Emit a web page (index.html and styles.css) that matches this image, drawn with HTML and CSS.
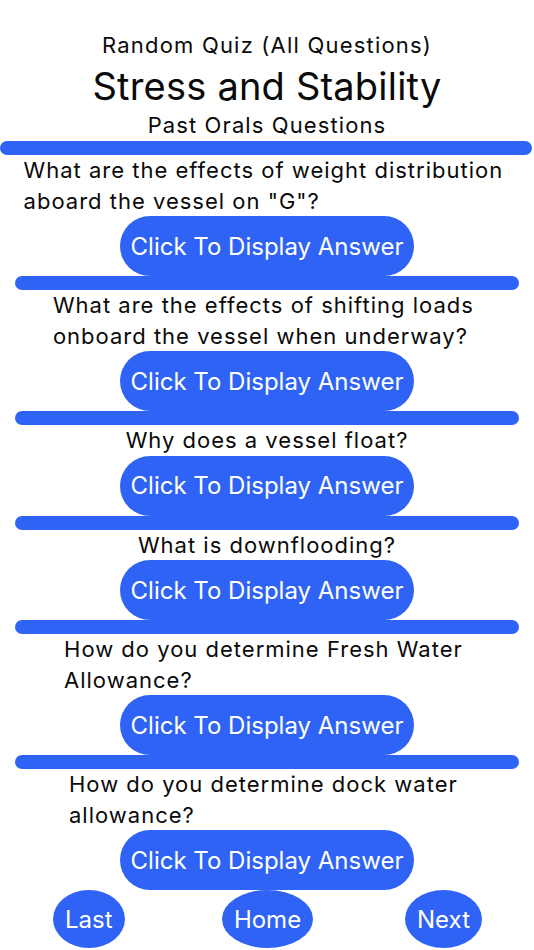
FILE: index.html
```html
<!DOCTYPE html>
<html lang="en">
<head>
<meta charset="utf-8">
<title>Stress and Stability</title>
<link rel="stylesheet" href="styles.css">
</head>
<body>
<div class="screen">
  <header class="header">
    <div class="sub">Random Quiz (All Questions)</div>
    <h1 class="title">Stress and Stability</h1>
    <div class="sub past">Past Orals Questions</div>
  </header>
  <div class="bar bar-top"></div>

  <section class="item">
    <p class="q">What are the effects of weight distribution <br>aboard the vessel on "G"?</p>
    <button class="answer">Click To Display Answer</button>
  </section>
  <div class="bar"></div>

  <section class="item">
    <p class="q">What are the effects of shifting loads <br>onboard the vessel when underway?</p>
    <button class="answer">Click To Display Answer</button>
  </section>
  <div class="bar"></div>

  <section class="item">
    <p class="q">Why does a vessel float?</p>
    <button class="answer">Click To Display Answer</button>
  </section>
  <div class="bar"></div>

  <section class="item">
    <p class="q">What is downflooding?</p>
    <button class="answer">Click To Display Answer</button>
  </section>
  <div class="bar"></div>

  <section class="item">
    <p class="q">How do you determine Fresh Water <br>Allowance?</p>
    <button class="answer">Click To Display Answer</button>
  </section>
  <div class="bar"></div>

  <section class="item">
    <p class="q">How do you determine dock water <br>allowance?</p>
    <button class="answer">Click To Display Answer</button>
  </section>

  <nav class="nav">
    <button class="nav-btn nav-left">Last</button>
    <button class="nav-btn nav-center">Home</button>
    <button class="nav-btn nav-right">Next</button>
  </nav>
</div>
</body>
</html>
```
FILE: styles.css
```css
html, body {
  margin: 0;
  padding: 0;
  background: #ffffff;
}

body {
  font-family: Inter, "Noto Sans", "Liberation Sans", sans-serif;
  color: #0a0a0a;
  width: 534px;
  height: 950px;
  overflow: hidden;
}

.screen {
  display: flex;
  flex-direction: column;
}

.header {
  display: flex;
  flex-direction: column;
  align-items: center;
  padding-top: 31px;
}

.sub {
  font-size: 22px;
  line-height: 28px;
  font-weight: 400;
  letter-spacing: 1.2px;
}

.title {
  margin: 0;
  font-size: 38px;
  font-weight: 400;
  line-height: 54px;
  letter-spacing: 0.2px;
}

.past {
  line-height: 24px;
  margin-bottom: 4px;
  letter-spacing: 1.1px;
}

.bar {
  height: 14px;
  border-radius: 7px;
  background: #2f63f5;
  margin: 0 15px;
}

.bar-top {
  margin: 0 2px 0 0;
}

.item {
  display: flex;
  flex-direction: column;
  align-items: center;
}

.q {
  margin: 0;
  width: max-content;
  text-align: left;
  white-space: pre;
  font-size: 22px;
  line-height: 30.5px;
  letter-spacing: 1px;
}

.answer {
  display: flex;
  align-items: center;
  justify-content: center;
  width: 294px;
  height: 60px;
  border: none;
  border-radius: 30px;
  background: #2f63f5;
  color: #ffffff;
  font-family: inherit;
  font-size: 24px;
  padding: 0;
}

.nav {
  display: grid;
  grid-template-columns: 1fr auto 1fr;
  align-items: start;
  padding: 0 52px 0 53px;
}

.nav-btn {
  height: 58px;
  padding: 0 12px;
  border: none;
  border-radius: 50%;
  background: #2f63f5;
  color: #ffffff;
  font-family: inherit;
  font-size: 24px;
}

.nav-left {
  justify-self: start;
}

.nav-center {
  justify-self: center;
}

.nav-right {
  justify-self: end;
}
```
